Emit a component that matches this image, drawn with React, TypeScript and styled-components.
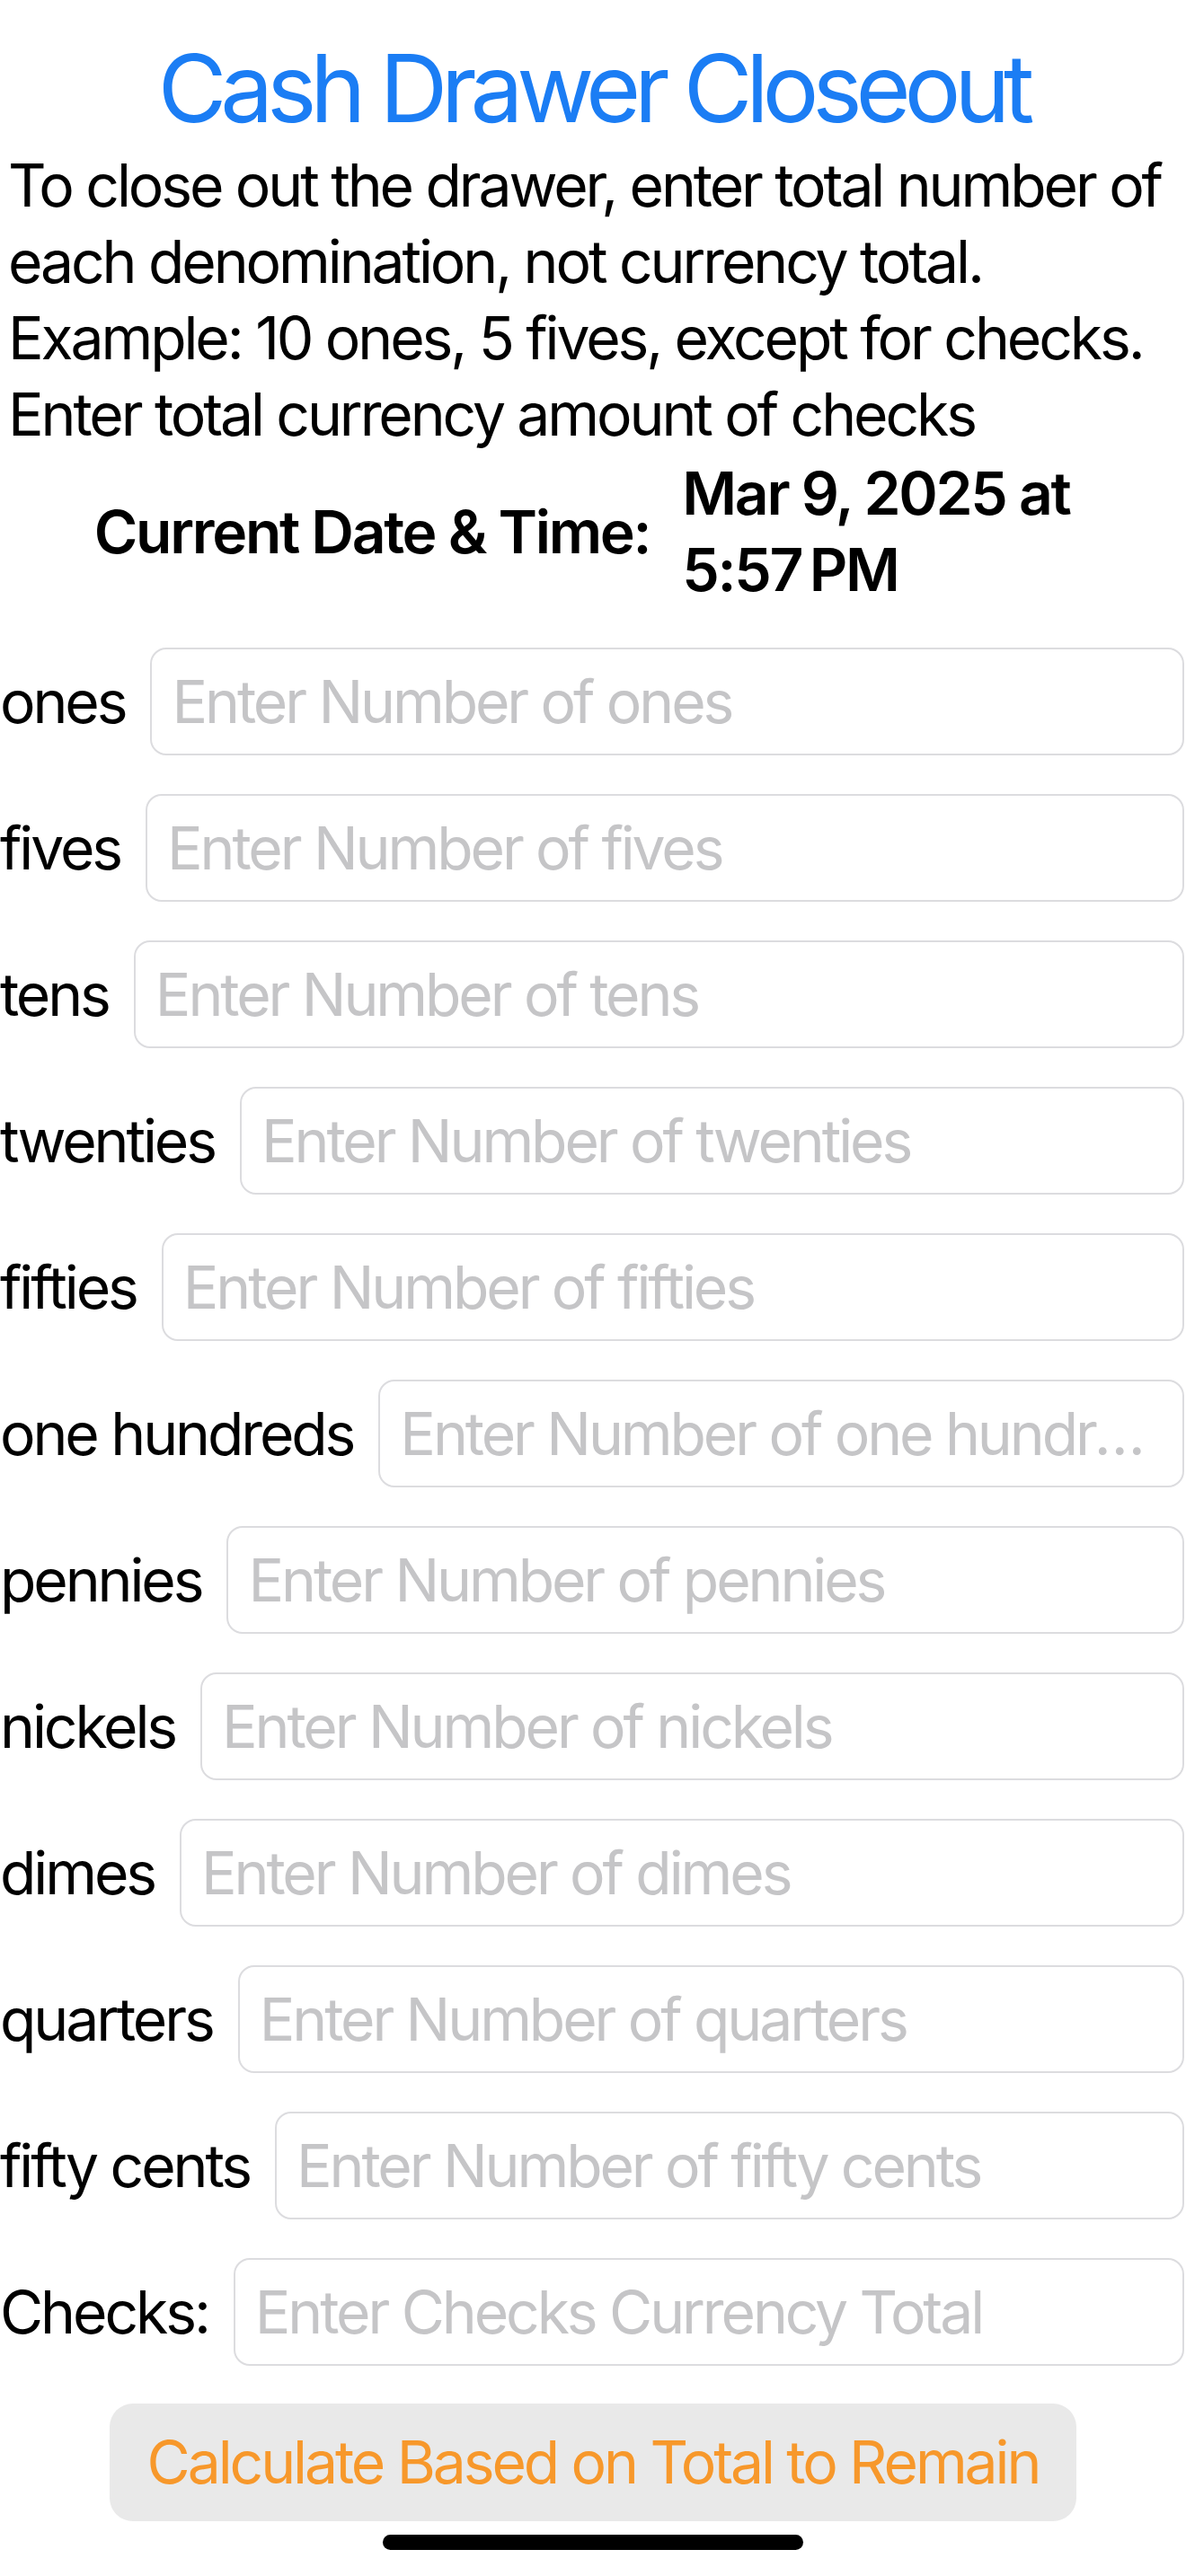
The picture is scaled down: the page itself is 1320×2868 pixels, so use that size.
import * as React from 'react';
import styled, { createGlobalStyle, css } from 'styled-components';

type Denomination = {
  label: string,
  placeholder: string
}

const denominations: Denomination[] = [
  { label: 'ones', placeholder: 'Enter Number of ones' },
  { label: 'fives', placeholder: 'Enter Number of fives' },
  { label: 'tens', placeholder: 'Enter Number of tens' },
  { label: 'twenties', placeholder: 'Enter Number of twenties' },
  { label: 'fifties', placeholder: 'Enter Number of fifties' },
  { label: 'one hundreds', placeholder: 'Enter Number of one hundreds' },
  { label: 'pennies', placeholder: 'Enter Number of pennies' },
  { label: 'nickels', placeholder: 'Enter Number of nickels' },
  { label: 'dimes', placeholder: 'Enter Number of dimes' },
  { label: 'quarters', placeholder: 'Enter Number of quarters' },
  { label: 'fifty cents', placeholder: 'Enter Number of fifty cents' },
  { label: 'Checks:', placeholder: 'Enter Checks Currency Total' }
];

export default function App () {
  const [ values, setValues ] = React.useState<Record<string, string>>( {} );

  return (
    <Screen>
      <GlobalStyle />
      <Title>Cash Drawer Closeout</Title>
      <Instructions>
        To close out the drawer, enter total number of each denomination, not currency total.
        Example: 10 ones, 5 fives, except for checks. Enter total currency amount of checks
      </Instructions>

      <DateRow>
        <DateLabel>Current Date &amp; Time:</DateLabel>
        <DateValue>{ 'Mar 9, 2025 at 5:57\u202FPM' }</DateValue>
      </DateRow>

      <Form>
        {
          denominations.map( d => (
            <FieldRow key={ d.label }>
              <FieldLabel>{ d.label }</FieldLabel>
              <FieldInput
                type="text"
                inputMode="decimal"
                placeholder={ d.placeholder }
                value={ values[ d.label ] || '' }
                onChange={ e => setValues( { ...values, [ d.label ]: e.target.value } ) }
              />
            </FieldRow>
          ) )
        }
      </Form>

      <ButtonRow>
        <CalculateButton type="button">Calculate Based on Total to Remain</CalculateButton>
      </ButtonRow>

      <HomeIndicator />
    </Screen>
  );
}

// body text size used everywhere except the title
const bodyText = css`
  font-family: Inter, "Noto Sans", sans-serif;
  font-size: 66px;
  line-height: 85px;
  letter-spacing: -3.1px;
`;

const GlobalStyle = createGlobalStyle`
  html, body {
    margin: 0;
    padding: 0;
    background: #ffffff;
  }

  body {
    font-family: Inter, "Noto Sans", sans-serif;
    color: #000000;
  }
`;

const Screen = styled.div`
  position: relative;
  width: 1320px;
  height: 2868px;
  overflow: hidden;
  background: #ffffff;
  padding-top: 36px;
  box-sizing: border-box;
`;

const Title = styled.h1`
  margin: 0;
  font-size: 105px;
  line-height: 123px;
  font-weight: 400;
  letter-spacing: -7.2px;
  color: #1b7df4;
  text-align: center;
`;

const Instructions = styled.p`
  ${ bodyText };
  margin: 5px 0 0;
  padding: 0 8px 0 9px;
`;

const DateRow = styled.div`
  display: flex;
  justify-content: center;
  align-items: center;
  gap: 36px;
  margin-top: 3px;
`;

const DateLabel = styled.div`
  ${ bodyText };
  font-weight: 600;
  letter-spacing: -2.3px;
  white-space: nowrap;
`;

const DateValue = styled.div`
  ${ bodyText };
  width: 456px;
  font-weight: 600;
  letter-spacing: -2.3px;
`;

const Form = styled.div`
  display: flex;
  flex-direction: column;
  gap: 43px;
  margin-top: 44px;
  padding-right: 2px;
`;

const FieldRow = styled.div`
  display: flex;
  align-items: center;
  gap: 28px;
`;

const FieldLabel = styled.div`
  ${ bodyText };
  flex: none;
  white-space: nowrap;
`;

const FieldInput = styled.input`
  ${ bodyText };
  flex: 1;
  min-width: 0;
  height: 120px;
  box-sizing: border-box;
  padding: 0 18px 0 22px;
  border: 2px solid #dcdcdf;
  border-radius: 18px;
  background: #ffffff;
  color: #000000;
  outline: none;
  text-overflow: ellipsis;

  &::placeholder {
    color: #c5c5c7;
    text-overflow: ellipsis;
  }
`;

const ButtonRow = styled.div`
  display: flex;
  justify-content: center;
  margin-top: 42px;
`;

const CalculateButton = styled.button`
  ${ bodyText };
  height: 131px;
  padding: 0 42px;
  border: none;
  border-radius: 26px;
  background: #e9e9e9;
  color: #f7982b;
  cursor: pointer;
`;

const HomeIndicator = styled.div`
  position: absolute;
  left: 426px;
  top: 2822px;
  width: 468px;
  height: 17px;
  border-radius: 9px;
  background: #000000;
`;
